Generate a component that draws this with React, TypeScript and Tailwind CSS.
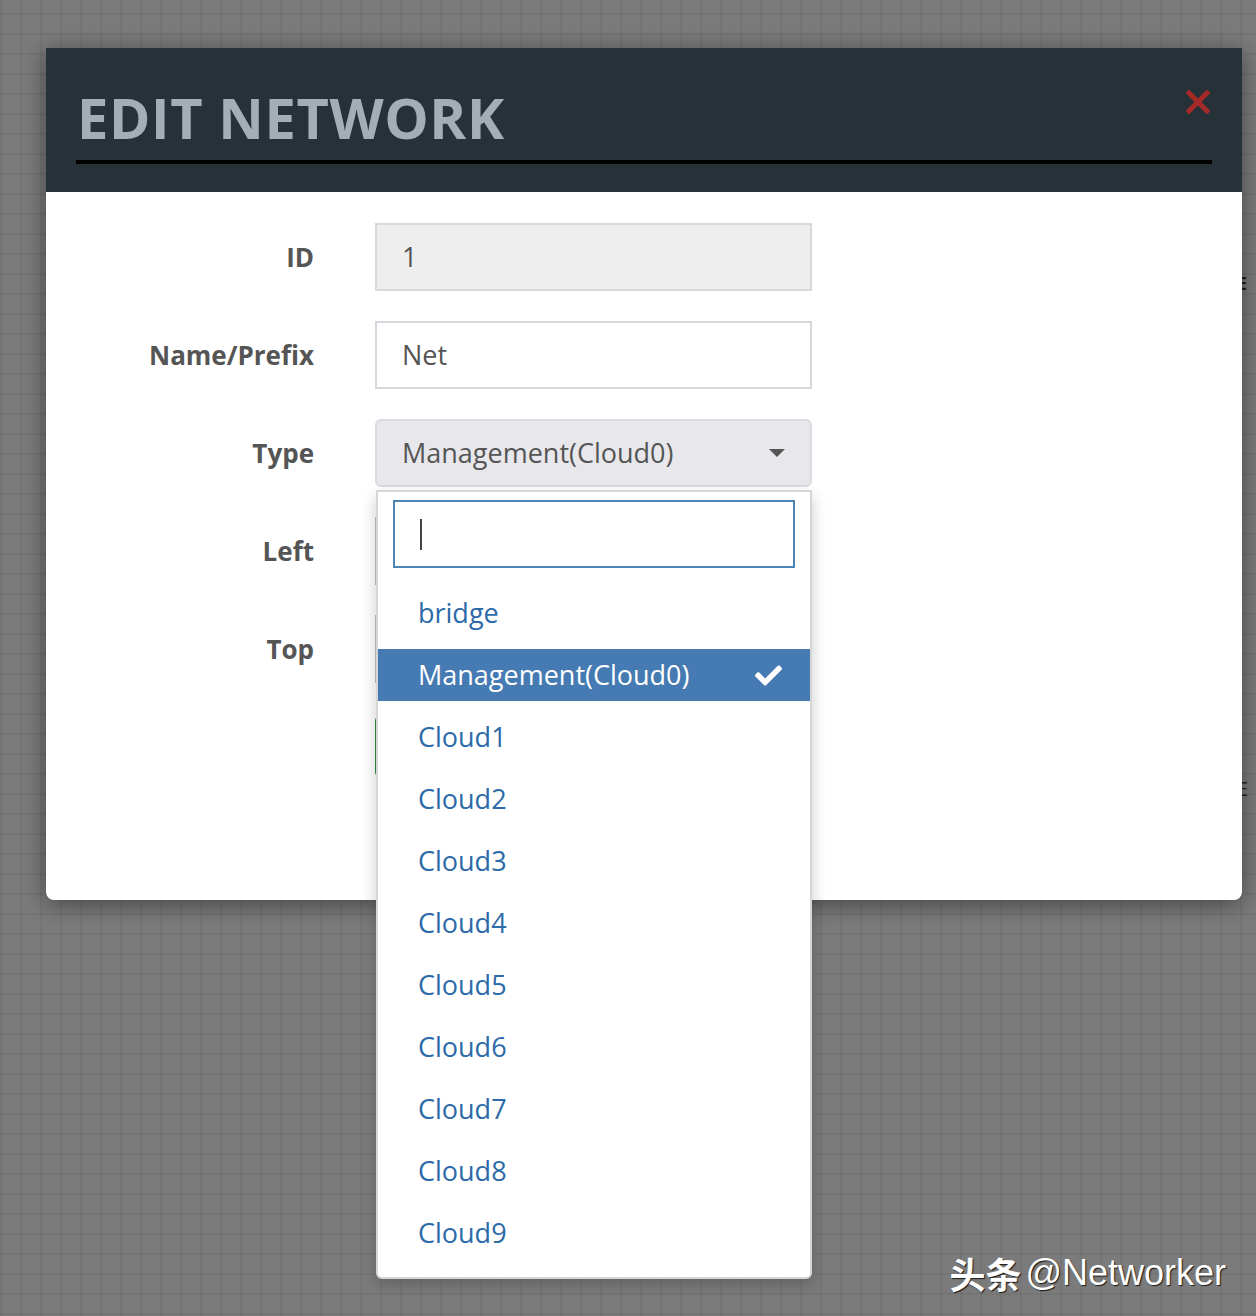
import { FaCheck } from "react-icons/fa";

const options = [
  "bridge",
  "Management(Cloud0)",
  "Cloud1",
  "Cloud2",
  "Cloud3",
  "Cloud4",
  "Cloud5",
  "Cloud6",
  "Cloud7",
  "Cloud8",
  "Cloud9",
];

const selected = "Management(Cloud0)";

export default function App() {
  return (
    <div
      className="relative h-[1316px] w-full overflow-hidden bg-[#7b7b7b] bg-[linear-gradient(to_right,rgba(0,0,0,0.05)_2px,transparent_2px),linear-gradient(to_bottom,rgba(0,0,0,0.05)_2px,transparent_2px)] bg-[length:20px_20px] bg-[position:0px_13px] pt-[48px] pl-[46px]"
      style={{ fontFamily: '"Open Sans", "Noto Sans", sans-serif' }}
    >
      {/* background labels peeking out behind the modal */}
      <span className="absolute left-[1237px] top-[270px] text-[18px] font-bold text-[#222]">E</span>
      <span className="absolute left-[1237px] top-[774px] text-[20px] text-[#222]">E</span>

      {/* Modal */}
      <div className="relative z-10 w-[1196px] rounded-b-lg bg-white shadow-[0_4px_24px_rgba(0,0,0,0.45)]">
        {/* Header */}
        <div className="relative h-[144px] bg-[#273238] px-[30px] pt-[36px]">
          <h2 className="border-b-[4px] border-black pb-[10px] pl-[1px] text-[56px] leading-[66px] font-bold tracking-[0.6px] text-[#a4aeb4]">
            EDIT NETWORK
          </h2>
          <button className="absolute right-[32px] top-[42px] text-[#a32a28]">
            <svg width="24" height="24" viewBox="0 0 24 24">
              <path d="M3 3 L21 21 M21 3 L3 21" stroke="currentColor" strokeWidth="5" strokeLinecap="square" />
            </svg>
          </button>
        </div>

        {/* Body */}
        <div className="grid grid-cols-[268px_437px] gap-x-[61px] gap-y-[30px] pt-[31px] pb-[122px]">
          <label className="flex h-[68px] items-center justify-end text-[26px] font-bold text-[#555]">ID</label>
          <div className="flex h-[68px] items-center border-2 border-[#d5d8dc] bg-[#eeeeee] px-[25px] text-[27px] text-[#555]">
            1
          </div>

          <label className="flex h-[68px] items-center justify-end text-[26px] font-bold text-[#555]">Name/Prefix</label>
          <div className="flex h-[68px] items-center border-2 border-[#d5d8dc] bg-white px-[25px] text-[27px] text-[#555]">
            Net
          </div>

          <label className="flex h-[68px] items-center justify-end text-[26px] font-bold text-[#555]">Type</label>
          <div className="relative">
            <div className="flex h-[68px] items-center justify-between rounded-md border-2 border-[#dcdce0] bg-[#e8e8ec] pl-[25px] pr-[25px] text-[27px] text-[#555]">
              <span>Management(Cloud0)</span>
              <span className="h-0 w-0 border-x-[8px] border-t-[8px] border-x-transparent border-t-[#555]" />
            </div>

            {/* Open dropdown */}
            <div className="absolute left-[1px] right-0 top-[71px] z-20 rounded-b-md border-2 border-[#d6d6d6] bg-white px-[15px] pt-[8px] pb-[13px] shadow-[0_6px_16px_rgba(0,0,0,0.2)]">
              <div className="flex h-[68px] items-center border-2 border-[#4a85b6] bg-white px-[25px]">
                <span className="h-[31px] w-[2px] bg-[#444]" />
              </div>
              <ul className="-mx-[15px] mt-[14px]">
                {options.map((o) => (
                  <li key={o} className="py-[5px]">
                    {o === selected ? (
                      <div className="flex h-[52px] items-center justify-between bg-[#457ab3] pl-[40px] pr-[28px] text-[27px] text-white">
                        <span>{o}</span>
                        <FaCheck size={27} />
                      </div>
                    ) : (
                      <div className="flex h-[52px] items-center pl-[40px] text-[27px] text-[#2c6aa8]">{o}</div>
                    )}
                  </li>
                ))}
              </ul>
            </div>
          </div>

          <label className="flex h-[68px] items-center justify-end text-[26px] font-bold text-[#555]">Left</label>
          <div className="h-[68px] border-2 border-[#c0c3c8] bg-white" />

          <label className="flex h-[68px] items-center justify-end text-[26px] font-bold text-[#555]">Top</label>
          <div className="h-[68px] border-2 border-[#c0c3c8] bg-white" />

          <div />
          <div className="pt-[2px]">
            <div className="h-[63px] w-[120px] rounded-md border-2 border-[#2e8a44] bg-[#3d9a4e]" />
          </div>
        </div>
      </div>

      {/* Watermark */}
      <div
        className="absolute right-[30px] top-[1246px] z-30 flex items-center gap-[4px] text-[36px] text-white [text-shadow:1px_1px_1px_rgba(0,0,0,0.8)]"
        style={{ fontFamily: '"Liberation Sans", "Noto Sans CJK SC", sans-serif' }}
      >
        <span className="font-bold" style={{ fontFamily: '"Noto Sans CJK SC", sans-serif' }}>头条</span>
        <span>@Networker</span>
      </div>
    </div>
  );
}
